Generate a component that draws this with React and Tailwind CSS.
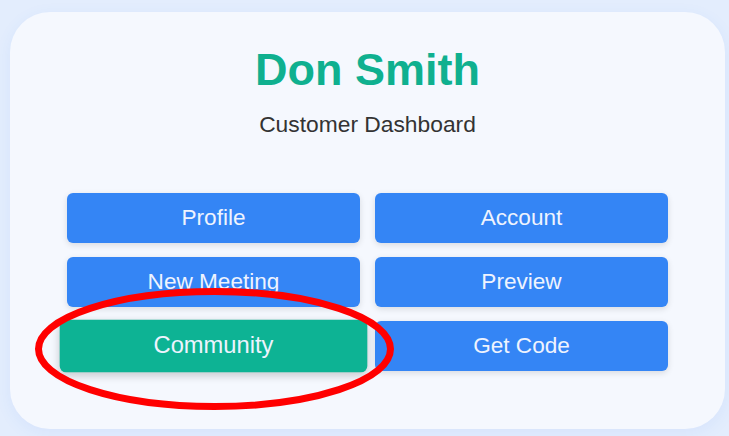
import React from "react";

const BUTTONS = [
  { label: "Profile" },
  { label: "Account" },
  { label: "New Meeting" },
  { label: "Preview" },
  { label: "Community", active: true },
  { label: "Get Code" },
];

export default function App() {
  return (
    <div
      className="relative min-h-screen bg-[#e3edfd] pt-[12px] pl-[10px]"
      style={{ fontFamily: '"Liberation Sans", Arial, sans-serif' }}
    >
      <div className="w-[715px] h-[417px] rounded-[40px] bg-[#f5f8fe] shadow-[0_4px_16px_rgba(59,130,246,0.08)] flex flex-col items-center pt-[32px]">
        <h1 className="text-[45px] font-bold text-[#0fb08f] leading-[52px]">Don Smith</h1>
        <p className="mt-[15px] text-[22.8px] text-[#333] leading-[26px]">Customer Dashboard</p>

        <div className="mt-[56px] grid grid-cols-2 gap-x-[15px] gap-y-[14px] w-[601px]">
          {BUTTONS.map((b) => (
            <button
              key={b.label}
              className={`h-[50px] rounded-[6px] text-[22.6px] text-[#eef3fe] ${
                b.active
                  ? "bg-[#0db394] scale-105 shadow-[0_3px_8px_rgba(0,0,0,0.18)]"
                  : "bg-[#3485f5] shadow-[0_2px_6px_rgba(0,0,0,0.12)]"
              }`}
            >
              {b.label}
            </button>
          ))}
        </div>
      </div>

      {/* red annotation ring */}
      <svg className="absolute left-0 top-0 pointer-events-none" width="729" height="436">
        <ellipse cx="214.5" cy="349" rx="176" ry="57.5" fill="none" stroke="#ff0000" strokeWidth="7" />
      </svg>
    </div>
  );
}
